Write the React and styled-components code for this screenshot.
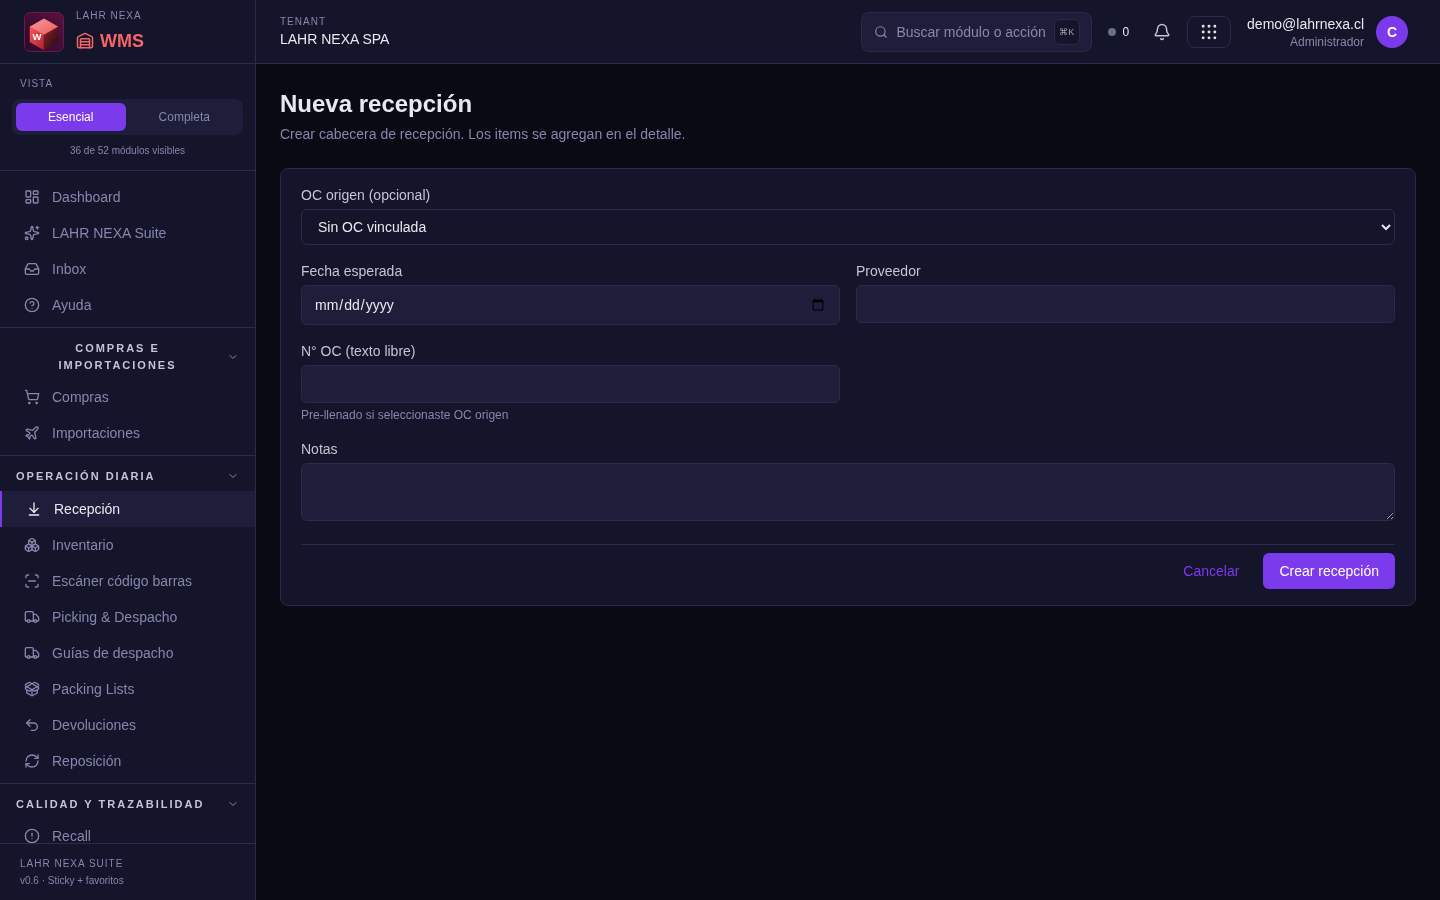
import styled, { createGlobalStyle } from "styled-components";
import {
  ArrowDownToLine,
  Bell,
  Boxes,
  ChevronDown,
  CircleAlert,
  CircleHelp,
  Grip,
  Inbox,
  LayoutDashboard,
  PackageOpen,
  Plane,
  RefreshCw,
  ScanLine,
  Search,
  ShoppingCart,
  Sparkles,
  Truck,
  Undo2,
  Warehouse,
} from "lucide-react";

const GlobalStyle = createGlobalStyle`
  * {
    box-sizing: border-box;
  }
  html, body, #root {
    height: 100%;
  }
  body {
    margin: 0;
    background: #0a0a14;
    color: #e8e8f0;
    font-family: "Liberation Sans", Arial, sans-serif;
    overflow: hidden;
  }
`;

const CubeLogo = () => (
  <LogoBox>
    <svg width="40" height="40" viewBox="0 0 40 40">
      <defs>
        <linearGradient id="tile" x1="1" y1="0" x2="0" y2="1">
          <stop offset="0" stopColor="#5a1040" />
          <stop offset="1" stopColor="#2a0a2a" />
        </linearGradient>
        <linearGradient id="top" x1="0" y1="0" x2="1" y2="1">
          <stop offset="0" stopColor="#fb9a98" />
          <stop offset="1" stopColor="#ee5a5e" />
        </linearGradient>
        <linearGradient id="left" x1="0" y1="0" x2="1" y2="1">
          <stop offset="0" stopColor="#f8585a" />
          <stop offset="1" stopColor="#b01f2c" />
        </linearGradient>
        <linearGradient id="right" x1="0" y1="0" x2="1" y2="1">
          <stop offset="0" stopColor="#8e1f2c" />
          <stop offset="1" stopColor="#1d0b14" />
        </linearGradient>
      </defs>
      <rect x="0.5" y="0.5" width="39" height="39" rx="6" fill="url(#tile)" stroke="#6b1a4e" />
      <path d="M20 7 L34 15 L20 23 L6 15 Z" fill="url(#top)" stroke="url(#top)" strokeLinejoin="round" />
      <path d="M6 15 L20 23 L20 38 L6 30 Z" fill="url(#left)" stroke="url(#left)" strokeWidth="0.5" strokeLinejoin="round" />
      <path d="M34 15 L20 23 L20 38 L34 30 Z" fill="url(#right)" stroke="url(#right)" strokeWidth="0.5" strokeLinejoin="round" />
      <text x="8.5" y="28" fontSize="9.5" fontWeight="700" fill="#fff" fontFamily="Liberation Sans, sans-serif">W</text>
    </svg>
  </LogoBox>
);

const sections = [
  {
    items: [
      { label: "Dashboard", icon: LayoutDashboard },
      { label: "LAHR NEXA Suite", icon: Sparkles },
      { label: "Inbox", icon: Inbox },
      { label: "Ayuda", icon: CircleHelp },
    ],
  },
  {
    title: "Compras e Importaciones",
    items: [
      { label: "Compras", icon: ShoppingCart },
      { label: "Importaciones", icon: Plane },
    ],
  },
  {
    title: "Operación diaria",
    items: [
      { label: "Recepción", icon: ArrowDownToLine, active: true },
      { label: "Inventario", icon: Boxes },
      { label: "Escáner código barras", icon: ScanLine },
      { label: "Picking & Despacho", icon: Truck },
      { label: "Guías de despacho", icon: Truck },
      { label: "Packing Lists", icon: PackageOpen },
      { label: "Devoluciones", icon: Undo2 },
      { label: "Reposición", icon: RefreshCw },
    ],
  },
  {
    title: "Calidad y trazabilidad",
    items: [{ label: "Recall", icon: CircleAlert }],
  },
];

export default function App() {
  return (
    <>
      <GlobalStyle />
      <Shell>
        <Sidebar>
          <Brand>
            <CubeLogo />
            <BrandText>
              <BrandName>LAHR NEXA</BrandName>
              <BrandApp>
                <Warehouse size={18} strokeWidth={2} />
                <span>WMS</span>
              </BrandApp>
            </BrandText>
          </Brand>

          <ViewPanel>
            <ViewLabel>VISTA</ViewLabel>
            <Toggle>
              <ToggleButton $on>Esencial</ToggleButton>
              <ToggleButton>Completa</ToggleButton>
            </Toggle>
            <ViewHint>36 de 52 módulos visibles</ViewHint>
          </ViewPanel>

          <Nav>
            {sections.map((section, i) => (
              <Section key={i} $first={i === 0}>
                {section.title && (
                  <SectionHead>
                    <span>{section.title}</span>
                    <ChevronDown size={12} />
                  </SectionHead>
                )}
                {section.items.map(({ label, icon: Icon, active }) => (
                  <NavRow key={label} $active={active}>
                    <Icon size={16} strokeWidth={2} />
                    <span>{label}</span>
                  </NavRow>
                ))}
              </Section>
            ))}
          </Nav>

          <SideFooter>
            <FooterName>LAHR NEXA SUITE</FooterName>
            <FooterVersion>v0.6 · Sticky + favoritos</FooterVersion>
          </SideFooter>
        </Sidebar>

        <Content>
          <TopBar>
            <Tenant>
              <TenantLabel>TENANT</TenantLabel>
              <TenantName>LAHR NEXA SPA</TenantName>
            </Tenant>
            <TopActions>
              <SearchBox>
                <Search size={14} />
                <span>Buscar módulo o acción</span>
                <Kbd>⌘K</Kbd>
              </SearchBox>
              <Status>
                <StatusDot />
                <span>0</span>
              </Status>
              <BellButton>
                <Bell size={18} />
              </BellButton>
              <GridButton>
                <Grip size={20} strokeWidth={1.5} />
              </GridButton>
              <User>
                <UserText>
                  <UserMail>demo@lahrnexa.cl</UserMail>
                  <UserRole>Administrador</UserRole>
                </UserText>
                <Avatar>C</Avatar>
              </User>
            </TopActions>
          </TopBar>

          <Main>
            <PageTitle>Nueva recepción</PageTitle>
            <PageSub>Crear cabecera de recepción. Los items se agregan en el detalle.</PageSub>

            <Card>
              <Field>
                <Label>OC origen (opcional)</Label>
                <Select defaultValue="">
                  <option value="">Sin OC vinculada</option>
                </Select>
              </Field>

              <TwoCols>
                <Field>
                  <Label>Fecha esperada</Label>
                  <Input type="date" $tall />
                </Field>
                <Field>
                  <Label>Proveedor</Label>
                  <Input type="text" />
                </Field>
              </TwoCols>

              <TwoCols>
                <Field>
                  <Label>N° OC (texto libre)</Label>
                  <Input type="text" />
                  <Help>Pre-llenado si seleccionaste OC origen</Help>
                </Field>
              </TwoCols>

              <Field>
                <Label>Notas</Label>
                <Textarea />
              </Field>

              <Actions>
                <GhostButton>Cancelar</GhostButton>
                <PrimaryButton>Crear recepción</PrimaryButton>
              </Actions>
            </Card>
          </Main>
        </Content>
      </Shell>
    </>
  );
}

const Shell = styled.div`
  display: flex;
  height: 100vh;
  will-change: transform;
`;

const Sidebar = styled.aside`
  display: flex;
  flex-direction: column;
  flex: none;
  width: 256px;
  height: 100%;
  background: #14142a;
  border-right: 1px solid #2a2a4a;
`;

const Brand = styled.div`
  display: flex;
  align-items: center;
  gap: 12px;
  flex: none;
  height: 64px;
  padding: 0 24px;
  border-bottom: 1px solid #2a2a4a;
`;

const LogoBox = styled.div`
  width: 40px;
  height: 40px;
  flex: none;

  svg {
    display: block;
  }
`;

const BrandText = styled.div`
  display: flex;
  flex-direction: column;
  align-self: stretch;
  padding-top: 9px;
`;

const BrandName = styled.div`
  font-size: 10px;
  line-height: 13px;
  letter-spacing: 1px;
  color: #8686ae;
`;

const BrandApp = styled.div`
  display: flex;
  align-items: center;
  gap: 6px;
  margin-top: 6px;
  color: #f56565;
  font-size: 18px;
  line-height: 26px;
  font-weight: 700;
`;

const ViewPanel = styled.div`
  flex: none;
  padding: 12px 12px 0;
  height: 107px;
  border-bottom: 1px solid #2a2a4a;
`;

const ViewLabel = styled.div`
  padding-left: 8px;
  font-size: 10px;
  line-height: 15px;
  letter-spacing: 1px;
  color: #8686ae;
`;

const Toggle = styled.div`
  display: grid;
  grid-template-columns: 1fr 1fr;
  gap: 4px;
  margin-top: 8px;
  padding: 4px;
  height: 36px;
  border-radius: 8px;
  background: #1e1e3a;
`;

const ToggleButton = styled.button`
  border: 0;
  border-radius: 6px;
  padding: 0;
  font: inherit;
  font-size: 12px;
  color: ${(p) => (p.$on ? "#ffffff" : "#8686ae")};
  background: ${(p) => (p.$on ? "#7c3aed" : "transparent")};
`;

const ViewHint = styled.div`
  margin-top: 8px;
  text-align: center;
  font-size: 10px;
  line-height: 15px;
  color: #8686ae;
`;

const Nav = styled.nav`
  flex: 1;
  min-height: 0;
  overflow: hidden;
  padding-top: 8px;
`;

const Section = styled.div`
  margin-top: ${(p) => (p.$first ? "0" : "4px")};
  border-top: ${(p) => (p.$first ? "0" : "1px solid #2a2a4a")};
`;

const SectionHead = styled.div`
  display: flex;
  align-items: center;
  justify-content: space-between;
  gap: 8px;
  padding: 12px 16px 6px;
  font-size: 11px;
  line-height: 16.5px;
  font-weight: 700;
  letter-spacing: 2px;
  text-transform: uppercase;
  text-align: center;
  color: #c4c4d6;

  svg {
    flex: none;
    color: #8686ae;
  }
`;

const NavRow = styled.a`
  display: flex;
  align-items: center;
  gap: 12px;
  height: 36px;
  padding: 0 24px;
  font-size: 14px;
  color: ${(p) => (p.$active ? "#e8e8f0" : "#8686ae")};
  background: ${(p) => (p.$active ? "#1e1e3a" : "transparent")};
  border-left: ${(p) => (p.$active ? "2px solid #7c3aed" : "0")};

  svg {
    flex: none;
  }
`;

const SideFooter = styled.div`
  flex: none;
  height: 57px;
  padding: 12px 20px 0;
  background: #14142a;
  border-top: 1px solid #2a2a4a;
`;

const FooterName = styled.div`
  font-size: 10px;
  line-height: 15px;
  letter-spacing: 1px;
  color: #8686ae;
`;

const FooterVersion = styled.div`
  margin-top: 2px;
  font-size: 10px;
  line-height: 15px;
  color: #8686ae;
`;

const Content = styled.div`
  display: flex;
  flex-direction: column;
  flex: 1;
  min-width: 0;
`;

const TopBar = styled.header`
  display: flex;
  align-items: center;
  justify-content: space-between;
  flex: none;
  height: 64px;
  padding: 0 32px 0 24px;
  background: #14142a;
  border-bottom: 1px solid #2a2a4a;
`;

const Tenant = styled.div`
  display: flex;
  flex-direction: column;
`;

const TenantLabel = styled.div`
  font-size: 10px;
  line-height: 15px;
  letter-spacing: 1px;
  color: #8686ae;
`;

const TenantName = styled.div`
  font-size: 14px;
  line-height: 20px;
  color: #e8e8f0;
`;

const TopActions = styled.div`
  display: flex;
  align-items: center;
`;

const SearchBox = styled.div`
  display: flex;
  align-items: center;
  gap: 8px;
  width: 231px;
  height: 40px;
  padding: 0 12px;
  border: 1px solid #2a2a4a;
  border-radius: 8px;
  background: #1e1e3a;
  font-size: 14px;
  color: #8686ae;
  white-space: nowrap;

  svg {
    flex: none;
  }
`;

const Kbd = styled.span`
  display: flex;
  align-items: center;
  justify-content: center;
  flex: none;
  width: 26px;
  height: 26px;
  border: 1px solid #2a2a4a;
  border-radius: 6px;
  background: #14142a;
  font-size: 9px;
  color: #a0a0bc;
`;

const Status = styled.div`
  display: flex;
  align-items: center;
  gap: 6px;
  margin-left: 16px;
  font-size: 12px;
  color: #e8e8f0;
`;

const StatusDot = styled.span`
  width: 8px;
  height: 8px;
  border-radius: 50%;
  background: #6b7280;
`;

const BellButton = styled.div`
  display: flex;
  margin-left: 24px;
  color: #c4c4d6;
`;

const GridButton = styled.div`
  display: flex;
  align-items: center;
  justify-content: center;
  width: 44px;
  height: 32px;
  margin-left: 16px;
  border: 1px solid #2a2a4a;
  border-radius: 8px;
  color: #e8e8f0;
`;

const User = styled.div`
  display: flex;
  align-items: center;
  gap: 12px;
  margin-left: 16px;
`;

const UserText = styled.div`
  text-align: right;
`;

const UserMail = styled.div`
  font-size: 14px;
  line-height: 20px;
  color: #e8e8f0;
`;

const UserRole = styled.div`
  font-size: 12px;
  line-height: 16px;
  color: #8686ae;
`;

const Avatar = styled.div`
  display: flex;
  align-items: center;
  justify-content: center;
  width: 32px;
  height: 32px;
  border-radius: 50%;
  background: #7c3aed;
  font-size: 14px;
  font-weight: 700;
  color: #ffffff;
`;

const Main = styled.main`
  flex: 1;
  min-height: 0;
  padding: 24px;
`;

const PageTitle = styled.h1`
  margin: 0;
  font-size: 24px;
  line-height: 32px;
  font-weight: 700;
  color: #e8e8f0;
`;

const PageSub = styled.p`
  margin: 4px 0 0;
  font-size: 14px;
  line-height: 20px;
  color: #8686ae;
`;

const Card = styled.section`
  display: flex;
  flex-direction: column;
  gap: 16px;
  margin-top: 24px;
  padding: 16px 20px;
  border: 1px solid #2a2a4a;
  border-radius: 8px;
  background: #14142a;
`;

const Field = styled.div`
  display: flex;
  flex-direction: column;
  min-width: 0;
`;

const TwoCols = styled.div`
  display: grid;
  grid-template-columns: 1fr 1fr;
  gap: 16px;
  align-items: start;
`;

const Label = styled.label`
  margin-bottom: 4px;
  font-size: 14px;
  line-height: 20px;
  color: #c4c4d6;
`;

const Select = styled.select`
  width: 100%;
  height: 36px;
  padding: 0 12px;
  border: 1px solid #2a2a4a;
  border-radius: 6px;
  background: #14142a;
  color: #e8e8f0;
  font: inherit;
  font-size: 14px;
`;

const Input = styled.input`
  width: 100%;
  height: ${(p) => (p.$tall ? "40px" : "38px")};
  padding: 0 12px;
  border: 1px solid #2a2a4a;
  border-radius: 6px;
  background: #1e1e3a;
  color: #e8e8f0;
  font: inherit;
  font-size: 14px;
`;

const Help = styled.div`
  margin-top: 4px;
  font-size: 12px;
  line-height: 16px;
  color: #8686ae;
`;

const Textarea = styled.textarea`
  display: block;
  width: 100%;
  height: 58px;
  padding: 8px 12px;
  border: 1px solid #2a2a4a;
  border-radius: 6px;
  background: #1e1e3a;
  color: #e8e8f0;
  font: inherit;
  font-size: 14px;
`;

const Actions = styled.div`
  display: flex;
  align-items: center;
  justify-content: flex-end;
  gap: 8px;
  margin-top: 7px;
  padding-top: 8px;
  border-top: 1px solid #2a2a4a;
`;

const GhostButton = styled.button`
  height: 36px;
  padding: 0 16px;
  border: 0;
  background: transparent;
  font: inherit;
  font-size: 14px;
  color: #7c3aed;
`;

const PrimaryButton = styled.button`
  height: 36px;
  padding: 0 16px;
  border: 0;
  border-radius: 6px;
  background: #7c3aed;
  font: inherit;
  font-size: 14px;
  color: #ffffff;
`;
